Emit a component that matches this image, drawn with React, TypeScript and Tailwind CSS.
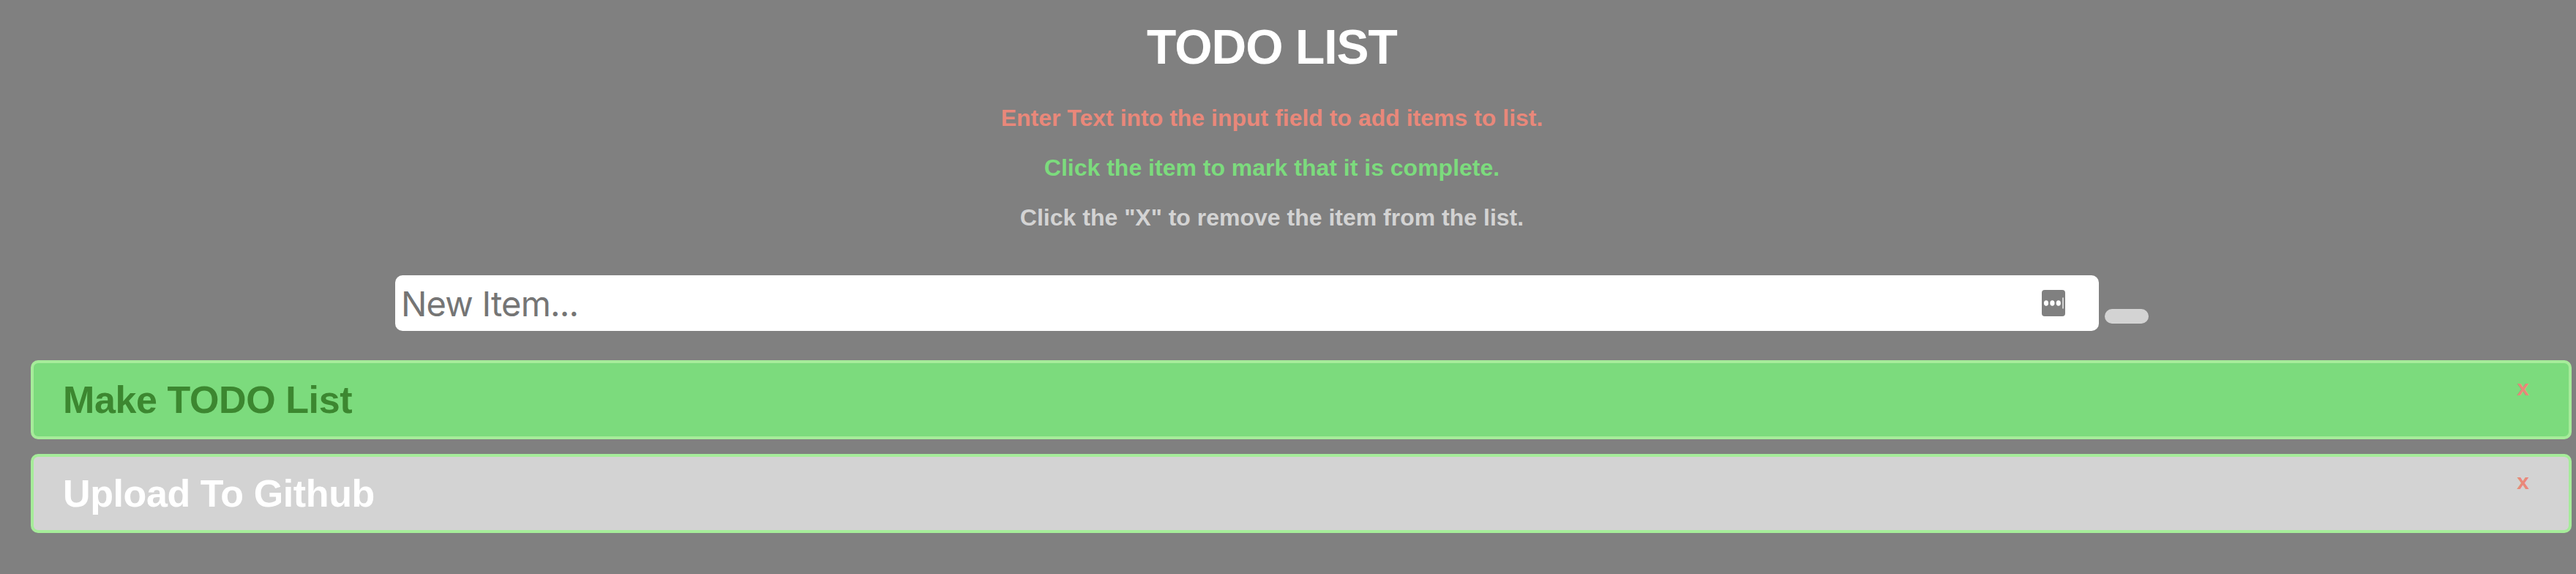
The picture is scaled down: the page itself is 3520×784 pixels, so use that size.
import { useState } from "react";

type Item = { text: string; done: boolean };

const startItems: Item[] = [
  { text: "Make TODO List", done: true },
  { text: "Upload To Github", done: false },
];

export default function App() {
  const [items, setItems] = useState<Item[]>(startItems);
  const [draft, setDraft] = useState("");

  const toggle = (index: number) =>
    setItems(items.map((item, i) => (i === index ? { ...item, done: !item.done } : item)));

  const remove = (index: number) => setItems(items.filter((_, i) => i !== index));

  const add = () => {
    if (draft.trim()) setItems([...items, { text: draft.trim(), done: false }]);
    setDraft("");
  };

  return (
    <div className="min-h-screen bg-[#808080] font-['Liberation_Sans',Arial,sans-serif] font-bold">
      <header className="flex w-[3476px] flex-col items-center text-[32px] leading-9">
        <h1 className="mt-[26px] text-[66px] leading-[76px] tracking-[-1px] text-white">TODO LIST</h1>
        <p className="mt-[41px] text-[#e9887a]">Enter Text into the input field to add items to list.</p>
        <p className="mt-8 text-[#7cdb7d]">Click the item to mark that it is complete.</p>
        <p className="mt-8 text-[#d3d3d3]">Click the "X" to remove the item from the list.</p>
      </header>

      <form
        className="mt-[61px] flex w-[3476px] justify-center gap-2"
        onSubmit={(e) => {
          e.preventDefault();
          add();
        }}
      >
        <div className="flex h-[76px] w-[2328px] items-center rounded-[10px] bg-white pr-[46px] pl-2">
          <input
            className="h-full min-w-0 flex-1 bg-transparent font-[Inter,sans-serif] text-[47px] font-normal tracking-[-0.8px] text-[#757575] outline-none placeholder:text-[#757575]"
            placeholder="New Item..."
            value={draft}
            onChange={(e) => setDraft(e.target.value)}
          />
          <svg className="h-9 w-8" viewBox="0 0 32 36" fill="none">
            <rect width="32" height="36" rx="4" fill="#808080" />
            <ellipse cx="6" cy="18" rx="3.1" ry="3.8" fill="white" />
            <ellipse cx="14.4" cy="18" rx="3.1" ry="3.8" fill="white" />
            <ellipse cx="22.8" cy="18" rx="3.1" ry="3.8" fill="white" />
            <path d="M29 10.5v15" stroke="#e8e8e8" strokeWidth="1.6" />
          </svg>
        </div>
        <button className="mt-[46px] h-5 w-[60px] rounded-full bg-[#d3d3d3]" aria-label="Add" />
      </form>

      <ul className="mt-10 mr-1.5 ml-[42px] flex flex-col gap-5">
        {items.map((item, index) => (
          <li
            key={index}
            onClick={() => toggle(index)}
            className={`flex h-[108px] items-start justify-between rounded-[10px] border-4 border-[#a6ec9a] pr-[54px] pl-10 ${
              item.done ? "bg-[#7cdb7d] text-[#3c8730]" : "bg-[#d3d3d3] text-white"
            }`}
          >
            <span className="pt-5 text-[52px] leading-[60px] tracking-[-0.4px]">{item.text}</span>
            <button
              className="mt-4 text-[30px] leading-9 text-[#e9887a]"
              onClick={(e) => {
                e.stopPropagation();
                remove(index);
              }}
            >
              x
            </button>
          </li>
        ))}
      </ul>
    </div>
  );
}
